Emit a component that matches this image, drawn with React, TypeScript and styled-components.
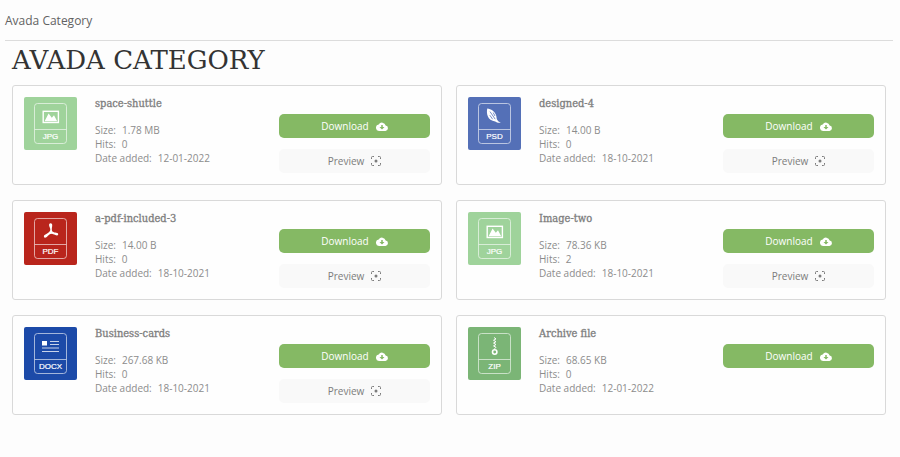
import React from "react";
import styled, { createGlobalStyle } from "styled-components";

type Kind = "jpg" | "psd" | "pdf" | "docx" | "zip";

interface FileEntry {
  title: string;
  kind: Kind;
  size: string;
  hits: number;
  added: string;
  preview: boolean;
}

const files: FileEntry[] = [
  { title: "space-shuttle", kind: "jpg", size: "1.78 MB", hits: 0, added: "12-01-2022", preview: true },
  { title: "designed-4", kind: "psd", size: "14.00 B", hits: 0, added: "18-10-2021", preview: true },
  { title: "a-pdf-included-3", kind: "pdf", size: "14.00 B", hits: 0, added: "18-10-2021", preview: true },
  { title: "Image-two", kind: "jpg", size: "78.36 KB", hits: 2, added: "18-10-2021", preview: true },
  { title: "Business-cards", kind: "docx", size: "267.68 KB", hits: 0, added: "18-10-2021", preview: true },
  { title: "Archive file", kind: "zip", size: "68.65 KB", hits: 0, added: "12-01-2022", preview: false },
];

const tint: Record<Kind, string> = {
  jpg: "#9fd39b",
  psd: "#5470b7",
  pdf: "#b9251c",
  docx: "#1c4aa8",
  zip: "#7bb576",
};

const GlobalStyle = createGlobalStyle`
  * { box-sizing: border-box; }
  body {
    margin: 0;
    background: #fdfdfd;
    color: #8c8c8c;
    font-family: "Open Sans", "Noto Sans", sans-serif;
    font-size: 10px;
    line-height: 14px;
  }
`;

const Page = styled.div`
  padding: 12px 7px 40px 5px;
`;

const Crumb = styled.nav`
  padding-bottom: 10px;
  border-bottom: 1px solid #dcdcdc;
  color: #626262;
  font-size: 12px;
  line-height: 18px;
`;

const Content = styled.main`
  padding: 0 7px;
`;

const Heading = styled.h1`
  margin: 0;
  padding: 3px 0 9px;
  color: #333;
  font-family: "DejaVu Serif", serif;
  font-size: 26px;
  font-weight: 400;
  line-height: 32px;
`;

const Grid = styled.div`
  display: grid;
  grid-template-columns: repeat(2, minmax(0, 1fr));
  gap: 15px 14px;
`;

const Card = styled.article`
  display: flex;
  gap: 18px;
  min-height: 100px;
  padding: 11px;
  border: 1px solid #d9d9d9;
  border-radius: 3px;
  background: #fefefe;
`;

const Tile = styled.svg`
  flex: none;
  width: 53px;
  height: 53px;
`;

const Info = styled.div`
  flex: 1;
  min-width: 0;
`;

const Title = styled.h2`
  margin: 0 0 12px;
  color: #7d7d7d;
  font-family: "DejaVu Serif Condensed", "DejaVu Serif", serif;
  font-size: 11px;
  font-weight: 400;
  line-height: 14px;
  -webkit-text-stroke: 0.3px #7d7d7d;
`;

const Facts = styled.dl`
  margin: 0;
`;

const Fact = styled.div`
  display: flex;
  gap: 6px;
`;

const Term = styled.dt``;

const Value = styled.dd`
  margin: 0;
`;

const Actions = styled.div`
  display: flex;
  flex: none;
  flex-direction: column;
  gap: 11px;
  width: 151px;
  padding-top: 17px;
`;

const ActionButton = styled.button<{ $primary?: boolean }>`
  display: flex;
  align-items: center;
  justify-content: center;
  gap: 7px;
  height: 24px;
  padding: 0;
  border: 0;
  border-radius: 5px;
  background: ${(p) => (p.$primary ? "#85b964" : "#f9f9f9")};
  color: ${(p) => (p.$primary ? "#fff" : "#7c7c7c")};
  font: inherit;
  cursor: pointer;
`;

const CloudIcon = () => (
  <svg width="12" height="9" viewBox="0 0 24 18" aria-hidden="true">
    <path
      fill="#fff"
      d="M19.3 7.1A7.5 7.5 0 0 0 5.4 5.1 6.5 6.5 0 0 0 6 18h13a5.5 5.5 0 0 0 .3-10.9z"
    />
    <path fill="#85b964" d="M10.5 6h3v4.2H17L12 15l-5-4.8h3.5z" />
  </svg>
);

const FocusIcon = () => (
  <svg width="10" height="10" viewBox="0 0 20 20" fill="none" stroke="#7c7c7c" strokeWidth="2" aria-hidden="true">
    <path d="M1 6V3a2 2 0 0 1 2-2h3M14 1h3a2 2 0 0 1 2 2v3M19 14v3a2 2 0 0 1-2 2h-3M6 19H3a2 2 0 0 1-2-2v-3" />
    <circle cx="10" cy="10" r="3" fill="#7c7c7c" stroke="none" />
  </svg>
);

const glyphs: Record<Kind, React.ReactNode> = {
  jpg: (
    <>
      <rect x="19.2" y="14.3" width="15.2" height="11.2" fill="none" stroke="#fff" strokeWidth="1.4" />
      <path fill="#fff" d="M20.6 24.2l4-7.6 3.200 4.200 2.200-2.600 3.200 6z" />
    </>
  ),
  psd: (
    <>
      <path
        fill="#fff"
        d="M19.300 11.500C23 11.800 26.800 14.500 28 18c.6 1.800.5 3.200 1 4.400.8 1.700 2 2.300 3.800 3.300-2.300.4-4.200-.2-5.600-1.300-3.700-.3-6.300-2.100-7.500-5.300-.9-2.600-1-5.200-.4-7.600z"
      />
      <path fill="none" stroke="#5470b7" strokeWidth="0.8" d="M22 14.600l5.200 7.600M21.800 18.200l2.800 4M25.200 15.600l1.800 3.400" />
    </>
  ),
  pdf: (
    <g fill="#fff">
      <path d="M26.600 11.300c1.300 0 1.800 1.100 1.600 2.600-.2 1.300-.5 2.600-.3 4.300.1.900.6 1.700 1.200 2.300l-2.100 1.300-1.900-1.500c.7-.8 1.200-1.800 1.200-2.900 0-1.300-.8-2.300-1.100-3.500-.3-1.500.1-2.600 1.400-2.600z" />
      <path d="M25.500 19.600l2 1.900c-1.500.6-2.700 1.400-3.800 2.500-1.100 1.200-2.300 2.100-3.300 1.400-.9-.7-.6-2 .6-2.700 1.800-.9 3.400-1.700 4.500-3.100z" />
      <path d="M28.500 19.500c1.200 1 2.500 1.100 3.700 1.200 1.400.1 2.300.8 2 1.900-.3 1.200-1.700 1.100-2.900.5-1.400-.8-2.900-1.400-4.600-1.400z" />
    </g>
  ),
  docx: (
    <>
      <rect x="18" y="14" width="5" height="4.5" fill="#fff" />
      <path stroke="#fff" strokeWidth="0.9" opacity="0.85" d="M26 14.500h9M26 17.500h9M18 21h17M18 24.500h17" />
    </>
  ),
  zip: (
    <g fill="none" stroke="#fff">
      <path strokeWidth="1" d="M26 10.500l2 1.400-2.500 1.400 2.500 1.400-2.500 1.400 2.500 1.400-2.500 1.400 2.500 1.400-1.500 1.500" />
      <circle cx="26.700" cy="25" r="2.200" strokeWidth="1.600" />
    </g>
  ),
};

const TileLabel = styled.text`
  fill: #fff;
  stroke: #fff;
  stroke-width: 0.2px;
  font-family: "Liberation Sans", Arial, sans-serif;
  font-size: 8px;
  text-anchor: middle;
`;

const FileTile = ({ kind }: { kind: Kind }) => (
  <Tile viewBox="0 0 53 53" role="img" aria-label={`${kind} file`}>
    <rect width="53" height="53" rx="2" fill={tint[kind]} />
    <g fill="none" stroke="#fff" strokeWidth="0.8" opacity="0.75">
      <rect x="10.5" y="6.5" width="32" height="40" rx="3" />
      <path d="M10.5 32.500h32" />
    </g>
    {glyphs[kind]}
    <TileLabel x="26.500" y="42">
      {kind.toUpperCase()}
    </TileLabel>
  </Tile>
);

const FileCard = ({ file }: { file: FileEntry }) => (
  <Card>
    <FileTile kind={file.kind} />
    <Info>
      <Title>{file.title}</Title>
      <Facts>
        <Fact>
          <Term>Size:</Term>
          <Value>{file.size}</Value>
        </Fact>
        <Fact>
          <Term>Hits:</Term>
          <Value>{file.hits}</Value>
        </Fact>
        <Fact>
          <Term>Date added:</Term>
          <Value>{file.added}</Value>
        </Fact>
      </Facts>
    </Info>
    <Actions>
      <ActionButton type="button" $primary>
        Download
        <CloudIcon />
      </ActionButton>
      {file.preview && (
        <ActionButton type="button">
          Preview
          <FocusIcon />
        </ActionButton>
      )}
    </Actions>
  </Card>
);

export default function App() {
  return (
    <>
      <GlobalStyle />
      <Page>
        <Crumb aria-label="Breadcrumb">Avada Category</Crumb>
        <Content>
          <Heading>AVADA CATEGORY</Heading>
          <Grid>
            {files.map((file) => (
              <FileCard key={file.title} file={file} />
            ))}
          </Grid>
        </Content>
      </Page>
    </>
  );
}
